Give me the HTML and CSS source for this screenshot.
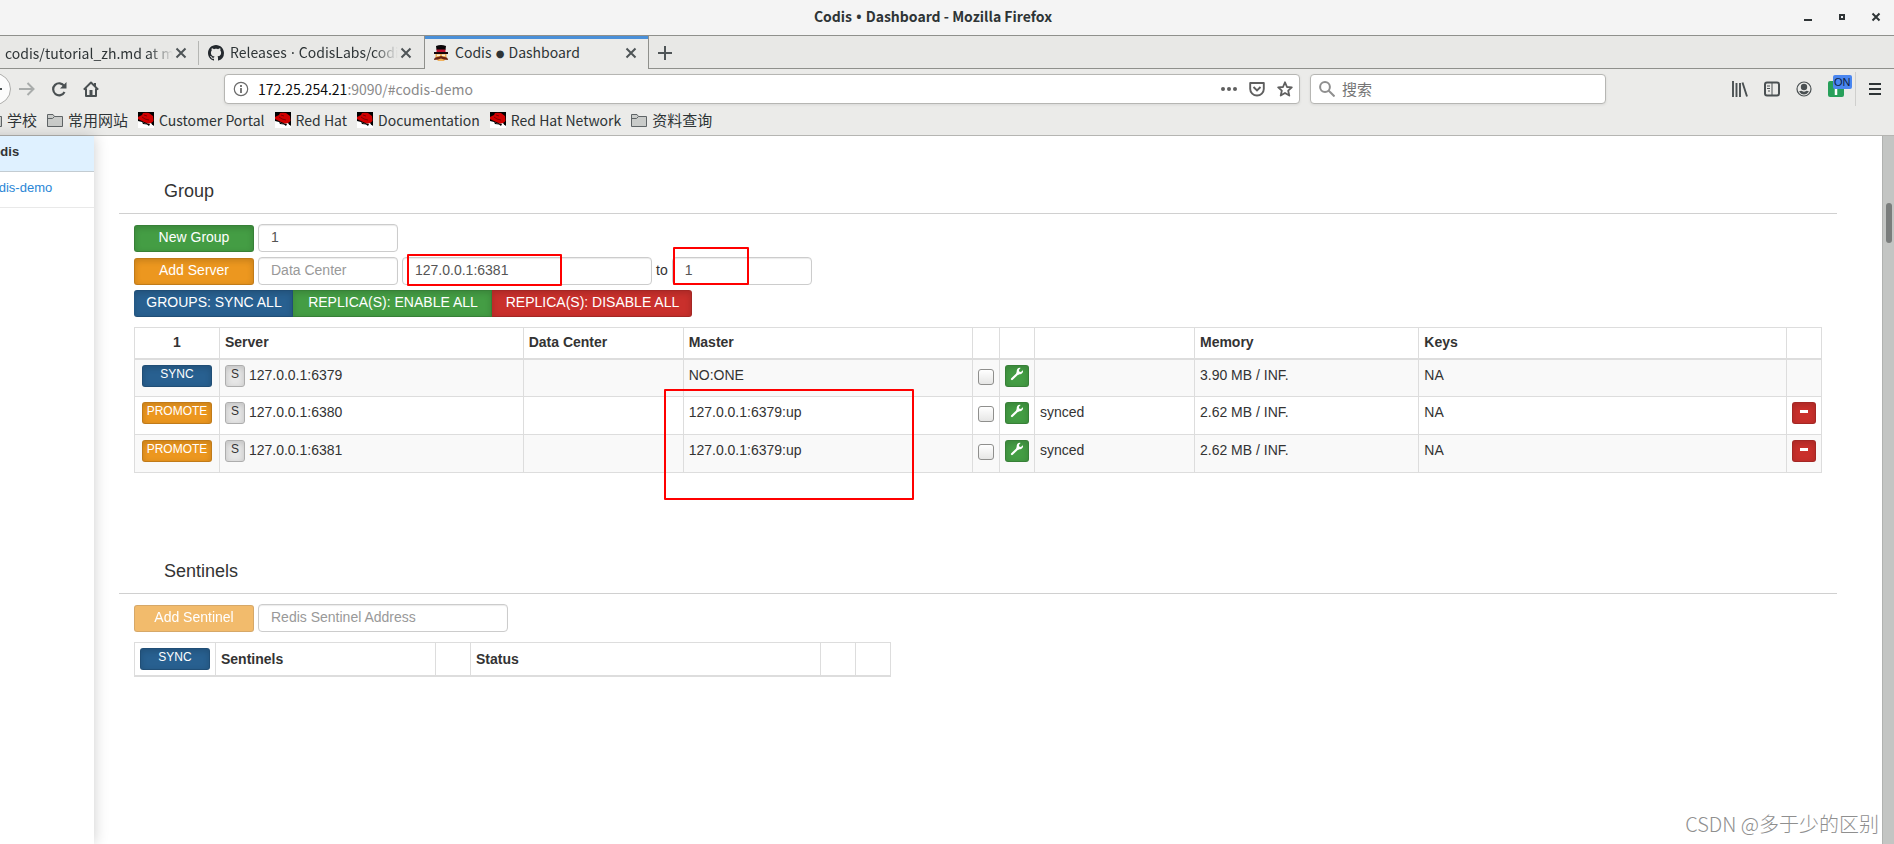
FILE: index.html
```html
<!DOCTYPE html>
<html lang="zh-CN">
<head>
<meta charset="utf-8">
<title>Codis • Dashboard</title>
<link rel="stylesheet" href="styles.css">
</head>
<body>
<svg class="defs" aria-hidden="true">
  <symbol id="close" viewBox="0 0 16 16"><path d="M3.500 3.500l9 9M12.500 3.500l-9 9" stroke="#4f5557" stroke-width="2" fill="none"/></symbol>
  <symbol id="folder" viewBox="0 0 16 16"><path d="M.5 14.500V2.500H6L7.500 4.500H15.500V14.500Z" fill="#c9cbc9" stroke="#5f6466"/><path d="M1 6.500H5.500L7.500 4.500" fill="none" stroke="#5f6466"/></symbol>
  <symbol id="redhat" viewBox="0 0 16 16"><path d="M0 0H16V16H0Z"/><path d="M0 9L4 10L8 12L15 10.500L16 12V16H0Z" fill="#fff"/><path d="M0 5L4 3L5 1L8 .8L11 1L15 4L15.500 9L14 11L10 11.500L6 10L3 8.500L0 7Z" fill="#d00000"/><path d="M4 5L7 7L11 8M6 3L9 4" stroke="#7d0000" fill="none"/><path d="M4 10L8 12L12 12L11 14L9 12.500L5 12Z"/><path d="M13 11L16 9V14L14 12.500Z"/></symbol>
  <symbol id="wrench" viewBox="0 0 14 14"><path d="M2 12L8 6.300" stroke="#fff" stroke-width="2.200" stroke-linecap="round"/><path d="M12.900 3.300L10.900 4.900L9.200 4.600L8.900 3L10.600 1C8.500 .4 6.500 2 6.700 4.500L6.200 6.500L7.700 8L9.500 7.300C12 7.300 13.500 5.400 12.900 3.300Z" fill="#fff"/></symbol>
</svg>

<div class="window">
  <header class="titlebar">
    <h1 class="window-title">Codis <span class="dot">•</span> Dashboard - Mozilla Firefox</h1>
    <div class="window-controls">
      <button class="icon-btn" aria-label="Minimize"><svg viewBox="0 0 16 16"><path d="M4 11H12" stroke="#2e3436" stroke-width="2"/></svg></button>
      <button class="icon-btn" aria-label="Maximize"><svg viewBox="0 0 16 16"><path d="M6 6H10V10H6Z" stroke="#2e3436" stroke-width="2" fill="none"/></svg></button>
      <button class="icon-btn" aria-label="Close window"><svg viewBox="0 0 16 16"><path d="M4.500 4.500l7 7M11.500 4.500l-7 7" stroke="#2e3436" stroke-width="2"/></svg></button>
    </div>
  </header>

  <nav class="tabs">
    <div class="tab tab-first"><span class="tab-label">codis/tutorial_zh.md at ma</span><button class="icon-btn" aria-label="Close tab"><svg><use href="#close"/></svg></button></div>
    <div class="tab tab-second">
      <svg class="icon" viewBox="0 0 16 16"><path fill="#24292e" d="M8 0C3.580 0 0 3.580 0 8c0 3.540 2.290 6.530 5.470 7.590.4.070.55-.17.55-.38 0-.19-.01-.82-.01-1.490-2.010.37-2.530-.49-2.690-.94-.09-.23-.48-.94-.82-1.130-.28-.15-.68-.52-.01-.53.63-.01 1.080.58 1.230.82.72 1.210 1.870.87 2.330.66.070-.52.28-.87.51-1.070-1.780-.2-3.640-.89-3.640-3.950 0-.87.31-1.590.82-2.150-.08-.2-.36-1.020.08-2.120 0 0 .67-.21 2.200.82.64-.18 1.320-.27 2-.27s1.360.09 2 .27c1.530-1.040 2.200-.82 2.200-.82.44 1.100.16 1.920.08 2.120.51.56.82 1.270.82 2.150 0 3.070-1.870 3.750-3.650 3.950.29.25.54.73.54 1.480 0 1.070-.01 1.930-.01 2.200 0 .21.15.46.55.38A8.010 8.010 0 0 0 16 8c0-4.420-3.580-8-8-8z"/></svg>
      <span class="tab-label">Releases <span class="dot">·</span> CodisLabs/codi</span><button class="icon-btn" aria-label="Close tab"><svg><use href="#close"/></svg></button>
    </div>
    <div class="tab tab-active">
      <svg class="icon" viewBox="0 0 16 16"><path d="M3 1Q8-1 13 1L12.500 5H3.500Z" fill="#0a0507"/><path d="M3.500 4.500H12.500V7H3.500Z" fill="#c4122f"/><path d="M1 7H15V9H1Z" fill="#16070a"/><path d="M2.500 9H13.500V13L11 16H5L2.500 13Z" fill="#f0b15c"/><path d="M4 9.500H7V11H4ZM9 9.500H12V11H9Z" fill="#fff0d8"/><path d="M1 15Q1 12 5 12L8 11L11 12Q15 12 15 15L11 14.500L8 13.500L5 14.500Z" fill="#6b2411"/></svg>
      <span class="tab-label">Codis <span class="dot big-dot">●</span> Dashboard</span><button class="icon-btn" aria-label="Close tab"><svg><use href="#close"/></svg></button>
    </div>
    <button class="icon-btn new-tab" aria-label="New tab"><svg viewBox="0 0 16 16"><path d="M8 1V15M1 8H15" stroke="#4f5557" stroke-width="2"/></svg></button>
  </nav>

  <div class="navbar">
    <button class="back" aria-label="Back"><svg class="icon" viewBox="0 0 16 16"><path d="M15 8H2M8 2L2 8l6 6" fill="none" stroke="#4a5052" stroke-width="2"/></svg></button>
    <button class="icon-btn" aria-label="Forward"><svg viewBox="0 0 16 16"><path d="M0 8H14M8.500 2L14.500 8l-6 6" fill="none" stroke="#a9acab" stroke-width="2"/></svg></button>
    <button class="icon-btn" aria-label="Reload"><svg viewBox="0 0 16 16"><path d="M13.200 5A6 6 0 1 0 13.500 11" fill="none" stroke="#4a5052" stroke-width="2.200"/><path d="M15.500 1V7.500H9Z" fill="#4a5052"/></svg></button>
    <button class="icon-btn" aria-label="Home"><svg viewBox="0 0 16 16"><path d="M.8 8.600L8 1.500L15.200 8.600M3 7.500V15H13V7.500M12 2V5" fill="none" stroke="#4a5052" stroke-width="2" stroke-linejoin="round"/><path d="M6.500 9H9.500V15H6.500Z" fill="#4a5052"/></svg></button>
    <div class="field urlbar">
      <svg class="icon" viewBox="0 0 16 16"><circle cx="8" cy="8" r="6.700" fill="none" stroke="#6b6b6b" stroke-width="1.200"/><path d="M8 7V12M8 4V6" stroke="#6b6b6b" stroke-width="1.800"/></svg>
      <a class="url" href="#codis-demo"><span class="host">172.25.254.21</span>:9090/#codis-demo</a>
      <button class="icon-btn" aria-label="Page actions"><svg viewBox="0 0 16 16"><g fill="#5f5f5f"><circle cx="2" cy="8" r="2"/><circle cx="8" cy="8" r="2"/><circle cx="14" cy="8" r="2"/></g></svg></button>
      <button class="icon-btn" aria-label="Save to Pocket"><svg viewBox="0 0 16 16"><path d="M1.200 2H14.800V8A6.800 6.500 0 0 1 1.200 8Z" fill="none" stroke="#5f5f5f" stroke-width="1.900" stroke-linejoin="round"/><path d="M4.500 6L8 9.500L11.500 6" fill="none" stroke="#5f5f5f" stroke-width="1.900"/></svg></button>
      <button class="icon-btn" aria-label="Bookmark this page"><svg viewBox="0 0 16 16"><path d="M8 1.300L10 6L14.800 6.400L11.200 9.700L12.300 14.600L8 12L3.700 14.600L4.800 9.700L1.200 6.400L6 6Z" fill="none" stroke="#5f5f5f" stroke-width="1.800" stroke-linejoin="round"/></svg></button>
    </div>
    <label class="field search">
      <svg class="icon" viewBox="0 0 16 16"><circle cx="6" cy="6" r="4.900" fill="none" stroke="#8f8f8f" stroke-width="2"/><path d="M9.500 9.500L15.500 15.500" stroke="#8f8f8f" stroke-width="2"/></svg>
      <input class="search-input" type="text" placeholder="搜索" aria-label="搜索">
    </label>
    <div class="tools">
      <button class="icon-btn" aria-label="Library"><svg viewBox="0 0 16 16"><path d="M1 0V16M4.500 2V16M8 2V16M10.500 1.500L15 15.500" stroke="#4a5052" stroke-width="1.900"/></svg></button>
      <button class="icon-btn" aria-label="Sidebars"><svg viewBox="0 0 16 16"><rect x="1" y="1.500" width="14" height="13" rx="2" fill="none" stroke="#4a5052" stroke-width="2"/><path d="M8 2V14M3 5H6M3 7.500H6M4 10H6" stroke="#4a5052"/></svg></button>
      <button class="icon-btn" aria-label="Account"><svg viewBox="0 0 16 16"><circle cx="8" cy="8" r="7" fill="none" stroke="#4a5052" stroke-width="1.200"/><circle cx="8" cy="6" r="3.200" fill="#4a5052"/><path d="M3 10.500Q5 9.500 6 10Q8 11.500 10 10Q11 9.500 13 10.500Q11 13.500 8 13.500Q5 13.500 3 10.500Z" fill="#4a5052"/></svg></button>
      <button class="icon-btn ext" aria-label="Extension"><svg viewBox="0 0 16 16"><rect width="16" height="16" rx="2" fill="#27a05a"/><path d="M8 7V14" stroke="#fff" stroke-width="2.500"/></svg><span class="badge">ON</span></button>
      <button class="icon-btn menu" aria-label="Menu"><svg viewBox="0 0 16 16"><path d="M2 3H14M2 8H14M2 13H14" stroke="#2e3436" stroke-width="2"/></svg></button>
    </div>
  </div>

  <nav class="bookmarks">
    <a class="bookmark folder" href="#"><svg class="icon"><use href="#folder"/></svg>学校</a>
    <a class="bookmark folder" href="#"><svg class="icon"><use href="#folder"/></svg>常用网站</a>
    <a class="bookmark" href="#"><svg class="icon"><use href="#redhat"/></svg>Customer Portal</a>
    <a class="bookmark" href="#"><svg class="icon"><use href="#redhat"/></svg>Red Hat</a>
    <a class="bookmark" href="#"><svg class="icon"><use href="#redhat"/></svg>Documentation</a>
    <a class="bookmark" href="#"><svg class="icon"><use href="#redhat"/></svg>Red Hat Network</a>
    <a class="bookmark folder" href="#"><svg class="icon"><use href="#folder"/></svg>资料查询</a>
  </nav>

  <div class="page">
    <aside class="sidebar">
      <div class="side-title">Codis</div>
      <a class="side-item" href="#codis-demo">codis-demo</a>
    </aside>

    <main class="content">
      <section class="section">
        <h2 class="heading">Group</h2>
        <div class="panel">
          <div class="form-row">
            <button class="btn green wide">New Group</button>
            <input class="input" type="text" value="1" aria-label="Group id">
          </div>
          <div class="form-row">
            <button class="btn orange wide">Add Server</button>
            <input class="input" type="text" placeholder="Data Center" aria-label="Data Center">
            <input class="input long" type="text" value="127.0.0.1:6381" aria-label="Server address">
            <label for="target">to</label>
            <input class="input" id="target" type="text" value="1">
            <span class="mark mark-address"></span>
            <span class="mark mark-target"></span>
          </div>
          <div class="btn-group">
            <button class="btn blue">GROUPS: SYNC ALL</button>
            <button class="btn green">REPLICA(S): ENABLE ALL</button>
            <button class="btn red">REPLICA(S): DISABLE ALL</button>
          </div>
          <div class="table-wrap">
            <table class="table servers">
              <colgroup><col class="c-action"><col class="c-server"><col class="c-160"><col class="c-master"><col class="c-check"><col class="c-icon"><col class="c-160"><col class="c-memory"><col><col class="c-icon"></colgroup>
              <thead><tr><th class="center">1</th><th>Server</th><th>Data Center</th><th>Master</th><th></th><th></th><th></th><th>Memory</th><th>Keys</th><th></th></tr></thead>
              <tbody>
                <tr><td class="center"><button class="btn small blue">SYNC</button></td><td><button class="btn small gray">S</button> 127.0.0.1:6379</td><td></td><td>NO:ONE</td><td><input class="check" type="checkbox" aria-label="Select 6379"></td><td><button class="btn small green square" aria-label="Configure"><svg><use href="#wrench"/></svg></button></td><td></td><td>3.90 MB / INF.</td><td>NA</td><td></td></tr>
                <tr><td class="center"><button class="btn small orange">PROMOTE</button></td><td><button class="btn small gray">S</button> 127.0.0.1:6380</td><td></td><td>127.0.0.1:6379:up</td><td><input class="check" type="checkbox" aria-label="Select 6380"></td><td><button class="btn small green square" aria-label="Configure"><svg><use href="#wrench"/></svg></button></td><td>synced</td><td>2.62 MB / INF.</td><td>NA</td><td><button class="btn small red square" aria-label="Remove"><svg viewBox="0 0 14 14"><path d="M3 6H11V9H3Z" fill="#fff"/></svg></button></td></tr>
                <tr><td class="center"><button class="btn small orange">PROMOTE</button></td><td><button class="btn small gray">S</button> 127.0.0.1:6381</td><td></td><td>127.0.0.1:6379:up</td><td><input class="check" type="checkbox" aria-label="Select 6381"></td><td><button class="btn small green square" aria-label="Configure"><svg><use href="#wrench"/></svg></button></td><td>synced</td><td>2.62 MB / INF.</td><td>NA</td><td><button class="btn small red square" aria-label="Remove"><svg viewBox="0 0 14 14"><path d="M3 6H11V9H3Z" fill="#fff"/></svg></button></td></tr>
              </tbody>
            </table>
            <span class="mark mark-master"></span>
          </div>
        </div>
      </section>

      <section class="section">
        <h2 class="heading">Sentinels</h2>
        <div class="panel">
          <div class="form-row">
            <button class="btn orange wide" disabled>Add Sentinel</button>
            <input class="input long" type="text" placeholder="Redis Sentinel Address" aria-label="Redis Sentinel Address">
          </div>
          <table class="table sentinels">
            <colgroup><col class="c-sync"><col class="c-sentinel"><col class="c-icon"><col><col class="c-icon"><col class="c-icon"></colgroup>
            <thead><tr><th><button class="btn small blue">SYNC</button></th><th>Sentinels</th><th></th><th>Status</th><th></th><th></th></tr></thead>
          </table>
        </div>
      </section>
    </main>
    <div class="scrollbar"><div class="thumb"></div></div>
  </div>
  <div class="watermark">CSDN @多于少的区别</div>
</div>
</body>
</html>
```
FILE: styles.css
```css
* { box-sizing: border-box; }
body { margin: 0; font: 14px/20px "Liberation Sans", Arial, sans-serif; color: #333; }
button, input { font: inherit; }
a { text-decoration: none; }
.defs { display: none; }
.window { position: relative; display: flex; flex-direction: column; height: 100vh; overflow: hidden; background: #ebebe9; }
.titlebar, .tabs, .navbar, .bookmarks { font-family: "Noto Sans CJK SC", sans-serif; font-size: 14px; color: #2e3436; flex: none; }
.dot { margin: 0 1px; font-family: "Noto Sans", "DejaVu Sans", sans-serif; }
.big-dot { font-size: 10px; vertical-align: 1px; }

.icon { width: 16px; height: 16px; flex: none; }
.icon-btn { display: flex; padding: 0; border: 0; background: none; flex: none; }
.icon-btn svg { width: 16px; height: 16px; }

.titlebar { display: grid; grid-template-columns: 1fr auto 1fr; align-items: center; height: 36px; padding: 0 10px 2px 0; background: #f4f4f4; border-bottom: 1px solid #8f908c; }
.window-title { grid-column: 2; margin: 0; padding-right: 18px; font-size: 14px; font-weight: 700; line-height: 20px; }
.window-controls { display: flex; justify-content: flex-end; gap: 18px; }

.tabs { display: flex; align-items: stretch; height: 33px; background: #e8e8e6; box-shadow: inset 0 -1px #8f908c; }
.tab { display: flex; align-items: center; gap: 6px; }
.tab .icon-btn { margin-left: auto; }
.tab-label { overflow: hidden; white-space: nowrap; }
.tab-first { width: 199px; padding: 0 10px 0 5px; gap: 0; background: linear-gradient(#b5b6b3, #b5b6b3) right center / 1px 24px no-repeat; }
.tab-second { width: 225px; padding: 0 10px 0 9px; }
.tab-second .icon-btn { margin-left: -6px; }
.tab-first .tab-label, .tab-second .tab-label { flex: 1; -webkit-mask-image: linear-gradient(90deg, #000 calc(100% - 24px), transparent); mask-image: linear-gradient(90deg, #000 calc(100% - 24px), transparent); }
.tab-active { width: 225px; padding: 0 9px 0 8px; background: #ebebe9; border: solid #8f908c; border-width: 0 1px; box-shadow: inset 0 3px #4a90d9; }
.new-tab { align-items: center; margin-left: 8px; }

.navbar { display: flex; align-items: center; height: 40px; padding-right: 11px; }
.back { width: 32px; height: 32px; margin: 0 8px 0 -21px; padding: 0 7px; border: 1px solid #adadab; border-radius: 16px; background: #fcfcfc; }
.back .icon { display: block; }
.navbar > .icon-btn { margin-right: 16px; }
.field { display: flex; align-items: center; min-width: 0; height: 30px; border: 1px solid #b6b6b3; border-radius: 4px; background: #fff; box-shadow: 0 1px 3px rgba(0, 0, 0, .08); }
.urlbar { flex: 1060 1 0; margin-left: 109px; padding: 0 6px 0 8px; gap: 12px; }
.url { flex: 1; margin-left: -3px; color: #8a8a8a; }
.host { color: #0c0c0d; }
.search { flex: 278 1 0; margin-left: 10px; padding: 0 8px; gap: 7px; }
.search-input { flex: 1; min-width: 0; padding: 0; border: 0; outline: 0; background: none; font-size: 15px; }
.search-input::placeholder { color: #757575; }
.tools { display: flex; flex: none; align-items: center; gap: 16px; margin-left: 126px; }
.ext { position: relative; }
.badge { position: absolute; top: -6px; left: 5px; padding: 0 1px; border-radius: 2px; background: #4a86f0; color: #0d1f45; font: 11px/14px "Liberation Sans", sans-serif; }
.menu { height: 34px; align-items: center; margin-left: -5px; padding-left: 11px; border-left: 1px solid #cfcfcd; }

.bookmarks { display: flex; align-items: center; gap: 10px; height: 27px; margin-left: -14px; padding-bottom: 4px; border-bottom: 1px solid #b5b5b2; white-space: nowrap; }
.bookmark { display: flex; align-items: center; gap: 5px; color: inherit; }
.folder { font-size: 15px; }

.page { display: flex; flex: 1; min-height: 0; background: #fff; }
.sidebar { flex: none; width: 111px; margin-left: -17px; box-shadow: 0 0 14px rgba(0, 0, 0, .2); font-size: 13px; }
.side-title { height: 36px; padding-top: 6px; border-bottom: 1px solid #c3ccd2; background: #dff1ff; font-weight: 700; }
.side-item { display: block; height: 36px; padding: 6px 0 0 2px; border-bottom: 1px solid #e9e9e9; color: #2a86d6; }
.content { flex: 1; min-width: 0; padding: 0 45px 0 25px; }
.section { height: 380px; padding-top: 40px; }
.heading { margin: 0; padding: 5px 45px 12px; border-bottom: 1px solid #d0d0d0; font-size: 18px; line-height: 20px; font-weight: 400; }
.panel { padding: 10px 15px 0; }

.form-row { position: relative; display: flex; align-items: flex-end; gap: 4px; margin-bottom: 5px; }
.form-row label { line-height: 26px; padding-bottom: 2px; }
.input { width: 140px; height: 28px; padding: 0 12px 2px; border: 1px solid #ccc; border-radius: 4px; box-shadow: inset 0 1px 1px rgba(0, 0, 0, .08); color: #555; background: #fff; outline: 0; }
.input::placeholder { color: #999; }
.long { width: 250px; }

.btn { height: 27px; padding: 0 0 4px; border: 1px solid rgba(0, 0, 0, .18); border-radius: 3px; color: #fff; line-height: 20px; white-space: nowrap; box-shadow: inset 0 2px 6px rgba(0, 0, 0, .16); }
.btn:disabled { opacity: .65; box-shadow: none; }
.wide { width: 120px; }
.green { background: #449d44; }
.orange { background: #ec971f; }
.blue { background: #286090; }
.red { background: #c9302c; }
.btn-group { display: flex; margin-bottom: 10px; }
.btn-group .btn { width: 199px; padding-left: 2px; border-radius: 0; border-left-width: 0; }
.btn-group .btn:first-child { width: 159px; border-radius: 3px 0 0 3px; }
.btn-group .btn:last-child { width: 200px; border-radius: 0 3px 3px 0; }
.small { width: 70px; height: 22px; font-size: 12px; font-weight: 400; line-height: 16px; vertical-align: middle; }
.small.gray { width: 20px; border-color: #adadad; background: #e6e6e6; color: #333; }
.small.square { display: block; width: 24px; }
.square svg { display: block; width: 14px; height: 14px; margin: 0 auto; }

.table-wrap { position: relative; }
.table { width: 100%; border-collapse: collapse; table-layout: fixed; }
.table th, .table td { padding: 5px; border: 1px solid #ddd; text-align: left; vertical-align: top; white-space: nowrap; }
.table th { border-bottom-width: 2px; }
.table.servers th { height: 31px; padding-top: 4px; padding-bottom: 4px; }
.table.servers td { height: 38px; padding-top: 5px; padding-bottom: 4px; }
.servers tbody tr:nth-child(odd) { background: #f9f9f9; }
.table .center { padding-left: 0; padding-right: 0; text-align: center; }
.c-action { width: 85px; }
.c-server { width: 18%; }
.c-160 { width: 160px; }
.c-master { width: 17.15%; }
.c-check { width: 27px; }
.c-icon { width: 35px; }
.c-memory { width: 13.3%; }
.check { appearance: none; display: block; width: 16px; height: 16px; margin: 4px 0 0; border: 1px solid #8f8f8d; border-radius: 3px; background: linear-gradient(#fff, #e6e6e5); }
.sentinels { width: 757px; margin-top: 10px; }
.sentinels th { vertical-align: middle; }
.sentinels .btn { display: block; }
.c-sync { width: 81px; }
.c-sentinel { width: 220px; }

.mark { position: absolute; border: 2px solid #f00; border-radius: 1px; pointer-events: none; }
.mark-address { left: 273px; top: -3px; width: 155px; height: 32px; }
.mark-target { left: 539px; top: -10px; width: 76px; height: 38px; }
.mark-master { left: 530px; top: 62px; width: 250px; height: 111px; }

.scrollbar { flex: none; width: 12px; padding: 67px 2px 0; background: #c3c5c3; border-left: 1px solid #b0b2b0; }
.thumb { width: 6px; height: 40px; margin-left: 1px; border-radius: 3px; background: #7a7d7c; }
.watermark { position: absolute; right: 15px; bottom: 6px; color: #8f8f8f; font: 300 20px/28px "Noto Sans CJK SC", sans-serif; text-shadow: 1px 1px #fff; }
```
